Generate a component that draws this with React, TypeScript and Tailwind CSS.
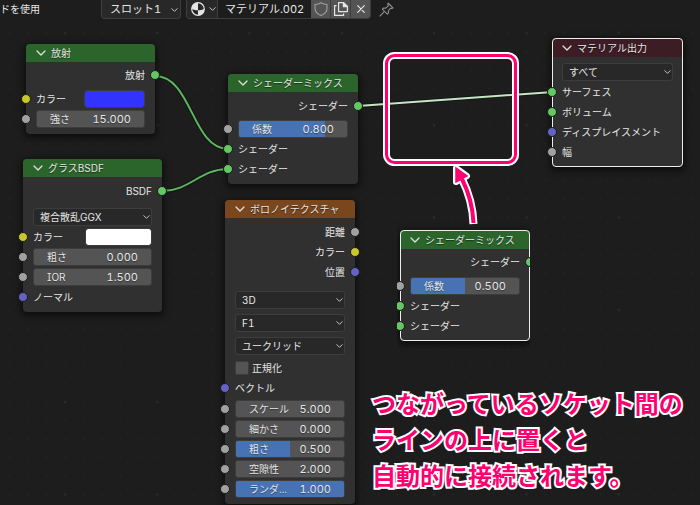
import { useId, useState } from "react";

type SocketType = "shader" | "color" | "value" | "vector";

const socketColors: Record<SocketType, string> = {
  shader: "bg-[#63c763]",
  color: "bg-[#c7c729]",
  value: "bg-[#a1a1a1]",
  vector: "bg-[#6363c7]",
};

const headerColors = {
  shader: "bg-[#2b652b]",
  texture: "bg-[#79461d]",
  output: "bg-[#3c1d26]",
};

const Chevron = ({ className }: { className: string }) => (
  <svg viewBox="0 0 10 6" className={className} fill="none" stroke="#e0e0e0" strokeWidth="1.3">
    <path d="M1 1l4 4 4-4" strokeLinecap="round" strokeLinejoin="round" />
  </svg>
);

const Socket = ({ type, side }: { type: SocketType; side: "left" | "right" }) => (
  <span
    className={`absolute top-[5px] size-2.5 rounded-full border border-[#1b1b1b] ${
      socketColors[type]
    } ${side === "left" ? "-left-[5px]" : "-right-[5px]"}`}
  />
);

const Output = ({ label, type }: { label: string; type: SocketType }) => (
  <div className="relative flex h-5 items-center justify-end px-2.5">
    {label}
    <Socket type={type} side="right" />
  </div>
);

const Input = ({ label, type }: { label: string; type: SocketType }) => (
  <div className="relative flex h-5 items-center px-2.5">
    {label}
    <Socket type={type} side="left" />
  </div>
);

const ColorInput = ({ label, value }: { label: string; value: string }) => {
  const [color, setColor] = useState(value);

  return (
    <label className="relative flex h-5 items-center px-2.5">
      <span className="w-[44%] shrink-0">{label}</span>
      <input
        type="color"
        value={color}
        onChange={(e) => setColor(e.target.value)}
        className="h-[18px] min-w-0 flex-1 appearance-none rounded-[3px] border border-[#3d3d3d] [&::-webkit-color-swatch-wrapper]:p-0 [&::-webkit-color-swatch]:rounded-[2px] [&::-webkit-color-swatch]:border-0"
      />
      <Socket type="color" side="left" />
    </label>
  );
};

interface NumberInputProps {
  label: string;
  value: string;
  factor?: number;
}

const NumberInput = ({ label, value, factor = 0 }: NumberInputProps) => {
  const [text, setText] = useState(value);

  return (
    <div className="relative flex h-5 items-center px-2.5">
      <label className="relative flex h-[18px] min-w-0 flex-1 items-center overflow-hidden rounded-[3px] border border-[#3d3d3d] bg-[#545454] px-[13px]">
        <span className="absolute inset-y-0 left-0 bg-[#4772b3]" style={{ width: `${factor * 100}%` }} />
        <span className="relative shrink-0 [text-shadow:0_1px_1px_#0006]">{label}</span>
        <input
          type="text"
          value={text}
          onChange={(e) => setText(e.target.value)}
          className="relative w-0 min-w-0 flex-1 bg-transparent text-right text-[11px] outline-none [text-shadow:0_1px_1px_#0006]"
        />
      </label>
      <Socket type="value" side="left" />
    </div>
  );
};

interface DropdownProps {
  label: string;
  options: string[];
  height?: string;
}

const Dropdown = ({ label, options, height = "h-5" }: DropdownProps) => (
  <div className={`relative flex items-center px-2.5 ${height}`}>
    <select
      aria-label={label}
      className="h-[18px] w-full appearance-none rounded-[3px] border border-[#3d3d3d] bg-[#282828] px-1.5"
    >
      {options.map((option) => (
        <option key={option}>{option}</option>
      ))}
    </select>
    <Chevron className="pointer-events-none absolute right-3 h-1 w-[7px]" />
  </div>
);

interface NodeProps {
  title: string;
  kind: keyof typeof headerColors;
  place: string;
  selected?: boolean;
  children: React.ReactNode;
}

const Node = ({ title, kind, place, selected, children }: NodeProps) => (
  <section className={`absolute rounded-[4px] bg-[#303030] pb-[5px] shadow-[0_2px_6px_2px_#0008] ${place}`}>
    <header
      className={`flex items-center gap-[5px] rounded-t-[4px] px-2.5 ${headerColors[kind]} ${
        selected ? "h-[19px]" : "h-[18px]"
      }`}
    >
      <button type="button" aria-label="折りたたむ">
        <Chevron className="h-1.5 w-2.5" />
      </button>
      <h2 className="[text-shadow:0_1px_1px_#0008]">{title}</h2>
    </header>
    {selected && (
      <span className="pointer-events-none absolute inset-0 rounded-[4px] border border-[#ededed]" />
    )}
    {children}
  </section>
);

const Checkbox = ({ label }: { label: string }) => {
  const id = useId();

  return (
    <div className="flex h-5 items-center gap-[3px] px-2.5">
      <input
        id={id}
        type="checkbox"
        className="size-3.5 appearance-none rounded-[2px] border border-[#3d3d3d] bg-[#545454] checked:bg-[#4772b3]"
      />
      <label htmlFor={id}>{label}</label>
    </div>
  );
};

const Toolbar = () => (
  <header className="flex h-5 items-start text-[11px] leading-[18px]">
    <div className="w-[101px] shrink-0 text-[10px] whitespace-nowrap">ドを使用</div>
    <div className="relative w-20">
      <select
        aria-label="スロット"
        className="h-[19px] w-full appearance-none rounded-b-[4px] border border-t-0 border-[#3d3d3d] bg-[#282828] px-2"
      >
        <option>スロット1</option>
      </select>
      <Chevron className="pointer-events-none absolute top-2 right-[3px] h-1 w-[7px]" />
    </div>
    <div className="ml-[5px] flex h-[19px] overflow-hidden rounded-b-[4px] border border-t-0 border-[#3d3d3d] bg-[#282828]">
      <button type="button" aria-label="マテリアルを選択" className="flex w-[31px] items-center gap-1 border-r border-[#3d3d3d] pl-1">
        <svg viewBox="0 0 14 14" className="size-3.5">
          <circle cx="7" cy="7" r="6.3" fill="#282828" stroke="#e6e6e6" strokeWidth="1.2" />
          <path d="M7 7V.7A6.3 6.3 0 0 0 .7 7c2 1 4 1.2 6.3 1.2z" fill="#e6e6e6" />
          <path d="M7 8.2c2.3 0 4.3-.3 6.3-1.2A6.3 6.3 0 0 1 7 13.3z" fill="#e6e6e6" />
        </svg>
        <Chevron className="h-1 w-[7px]" />
      </button>
      <input aria-label="マテリアル名" defaultValue="マテリアル.002" className="w-[93px] bg-[#1d1d1d] pl-[7px] outline-none" />
      <button type="button" aria-label="フェイクユーザー" className="flex w-5 items-center justify-center border-r border-[#3d3d3d] bg-[#545454]">
        <svg viewBox="0 0 14 14" className="size-3.5" fill="none" stroke="#a0a0a0" strokeWidth="1.1">
          <path d="M7 .8C5.3 2 3.3 2.5 1 2.5v3.7c0 3.3 2.4 5.8 6 7.2 3.600-1.4 6-3.9 6-7.2V2.5C10.7 2.5 8.7 2 7 .8z" strokeLinejoin="round" />
        </svg>
      </button>
      <button type="button" aria-label="複製" className="flex w-5 items-center justify-center border-r border-[#3d3d3d] bg-[#545454]">
        <svg viewBox="0 0 14 14" className="size-3.5" fill="none" stroke="#e6e6e6" strokeWidth="1.2">
          <path d="M4.6.6h5l3.8 3.8v5.2H4.6z" strokeLinejoin="round" />
          <path d="M9.4.8v3.8h3.8z" fill="#e6e6e6" />
          <path d="M2.5 3.6H.6v9.8h9v-1.800" strokeLinejoin="round" />
        </svg>
      </button>
      <button type="button" aria-label="リンク解除" className="flex w-[19px] items-center justify-center bg-[#545454]">
        <svg viewBox="0 0 8 8" className="size-2" stroke="#e6e6e6" strokeWidth="1.2" strokeLinecap="round">
          <path d="M.7.7l6.6 6.6M7.3.7L.7 7.3" />
        </svg>
      </button>
    </div>
    <button type="button" aria-label="ピン" className="ml-2 flex h-[18px] items-center">
      <svg viewBox="0 0 15 15" className="size-[15px]" fill="none" stroke="#8c8c8c" strokeWidth="1.1" strokeLinejoin="round">
        <path d="M9 1l5 5-1.4.5-.9-.3-2.300 2.500.1 2.300-1.200 1.200L3.300 7.200 4.500 6l2.300.1 2.500-2.300L8.800 2.500z" />
        <path d="M5.3 9.7L1 14" strokeLinecap="round" />
      </svg>
    </button>
  </header>
);

// Dotted grid, every fifth dot slightly larger
const Grid = () => (
  <svg className="absolute inset-0 size-full">
    <defs>
      <pattern id="minor" x="55.8" y="3.8" width="18.46" height="18.46" patternUnits="userSpaceOnUse">
        <circle cx="9.2" cy="9.2" r=".8" fill="#272727" />
      </pattern>
      <pattern id="major" x="55" y="3" width="92.3" height="92.3" patternUnits="userSpaceOnUse">
        <circle cx="10" cy="10" r="1.2" fill="#2b2b2b" />
      </pattern>
    </defs>
    <rect width="100%" height="100%" fill="url(#minor)" />
    <rect width="100%" height="100%" fill="url(#major)" />
  </svg>
);

const Links = () => (
  <svg className="pointer-events-none absolute inset-0 size-full" fill="none">
    <g stroke="#151515" strokeWidth="4">
      <path d="M155 56C192 56 192 129 228 129" />
      <path d="M162 171C190 171 200 149 228 149" />
      <path d="M358 86L553 72" />
    </g>
    <g stroke="#5cb85c" strokeWidth="2">
      <path d="M155 56C192 56 192 129 228 129" />
      <path d="M162 171C190 171 200 149 228 149" />
      <path d="M358 86L553 72" stroke="#c4e6c4" />
    </g>
  </svg>
);

const Highlight = () => (
  <svg className="pointer-events-none absolute inset-0 size-full" fill="none">
    <g stroke="#fff" strokeLinejoin="round">
      <path d="M473.5 204C473 190 469 173 462 159" strokeWidth="8" />
      <path d="M456 148v14l11-6z" fill="#fff" strokeWidth="6" />
      <rect x="386.5" y="35.5" width="129" height="107" rx="8" strokeWidth="7" />
    </g>
    <g stroke="#ff0070">
      <path d="M473.5 203C473 190 469 173 462 159" strokeWidth="4" />
      <path d="M456 148v14l11-6z" fill="#ff0070" strokeWidth="1.5" />
      <rect x="386.5" y="35.5" width="129" height="107" rx="8" strokeWidth="3" />
    </g>
  </svg>
);

const App = () => {
  return (
    <div className="flex min-h-screen flex-col overflow-hidden bg-[#1d1d1d] font-['Inter','Noto_Sans_CJK_JP',sans-serif] text-[10px] leading-4 text-[#e6e6e6] [font-feature-settings:'tnum','cv08']">
      <Toolbar />
      <main className="relative flex-1">
        <Grid />
        <Links />

        <Node title="放射" kind="shader" place="left-[26px] top-[24px] w-[129px]">
          <div className="pt-[3px]">
            <Output label="放射" type="shader" />
          </div>
          <div className="pt-1">
            <ColorInput label="カラー" value="#3333ff" />
            <NumberInput label="強さ" value="15.000" />
          </div>
        </Node>

        <Node title="グラスBSDF" kind="shader" place="left-[23px] top-[139px] w-[139px]">
          <div className="pt-1">
            <Output label="BSDF" type="shader" />
          </div>
          <div className="pt-[5px]">
            <Dropdown label="分布" options={["複合散乱GGX", "GGX", "ベックマン"]} height="h-[21px]" />
            <ColorInput label="カラー" value="#ffffff" />
            <NumberInput label="粗さ" value="0.000" />
            <NumberInput label="IOR" value="1.500" />
            <Input label="ノーマル" type="vector" />
          </div>
        </Node>

        <Node title="シェーダーミックス" kind="shader" place="left-[228px] top-[54px] w-[130px]">
          <div className="pt-1">
            <Output label="シェーダー" type="shader" />
          </div>
          <div className="pt-[3px]">
            <NumberInput label="係数" value="0.800" factor={0.8} />
            <Input label="シェーダー" type="shader" />
            <Input label="シェーダー" type="shader" />
          </div>
        </Node>

        <Node title="ボロノイテクスチャ" kind="texture" place="left-[225px] top-[180px] w-[130px]">
          <div className="pt-1">
            <Output label="距離" type="value" />
            <Output label="カラー" type="color" />
            <Output label="位置" type="vector" />
          </div>
          <div className="pt-1.5">
            <Dropdown label="次元" options={["3D", "1D", "2D", "4D"]} height="h-[23px]" />
            <Dropdown label="特徴出力" options={["F1", "F2"]} height="h-[23px]" />
            <Dropdown label="距離の種類" options={["ユークリッド", "マンハッタン"]} height="h-[23px]" />
          </div>
          <div className="pt-px">
            <Checkbox label="正規化" />
            <Input label="ベクトル" type="vector" />
          </div>
          <div className="pt-px">
            <NumberInput label="スケール" value="5.000" />
            <NumberInput label="細かさ" value="0.000" />
            <NumberInput label="粗さ" value="0.500" factor={0.5} />
            <NumberInput label="空隙性" value="2.000" />
            <NumberInput label="ランダ..." value="1.000" factor={1} />
          </div>
        </Node>

        <Node title="マテリアル出力" kind="output" place="left-[552px] top-[18px] w-[131px]" selected>
          <div className="pt-[5px]">
            <Dropdown label="ターゲット" options={["すべて", "Eevee", "Cycles"]} />
            <Input label="サーフェス" type="shader" />
            <Input label="ボリューム" type="shader" />
            <Input label="ディスプレイスメント" type="vector" />
            <Input label="幅" type="value" />
          </div>
        </Node>

        <Node
          title="シェーダーミックス"
          kind="shader"
          place="left-[400px] top-[210px] w-[130px] [clip-path:inset(-8px_0_-8px_-3px)]"
          selected
        >
          <div className="pt-[3px]">
            <Output label="シェーダー" type="shader" />
          </div>
          <div className="pt-1">
            <NumberInput label="係数" value="0.500" factor={0.5} />
            <Input label="シェーダー" type="shader" />
            <Input label="シェーダー" type="shader" />
          </div>
        </Node>

        <Highlight />

        <p className="absolute top-[367px] left-[372px] text-2xl leading-9 font-bold whitespace-nowrap text-[#ff0070] [-webkit-text-stroke:4px_#fff] [paint-order:stroke_fill]">
          つながっているソケット間の
          <br />
          ラインの上に置くと
          <br />
          自動的に接続されます。
        </p>
      </main>
    </div>
  );
};

export default App;
